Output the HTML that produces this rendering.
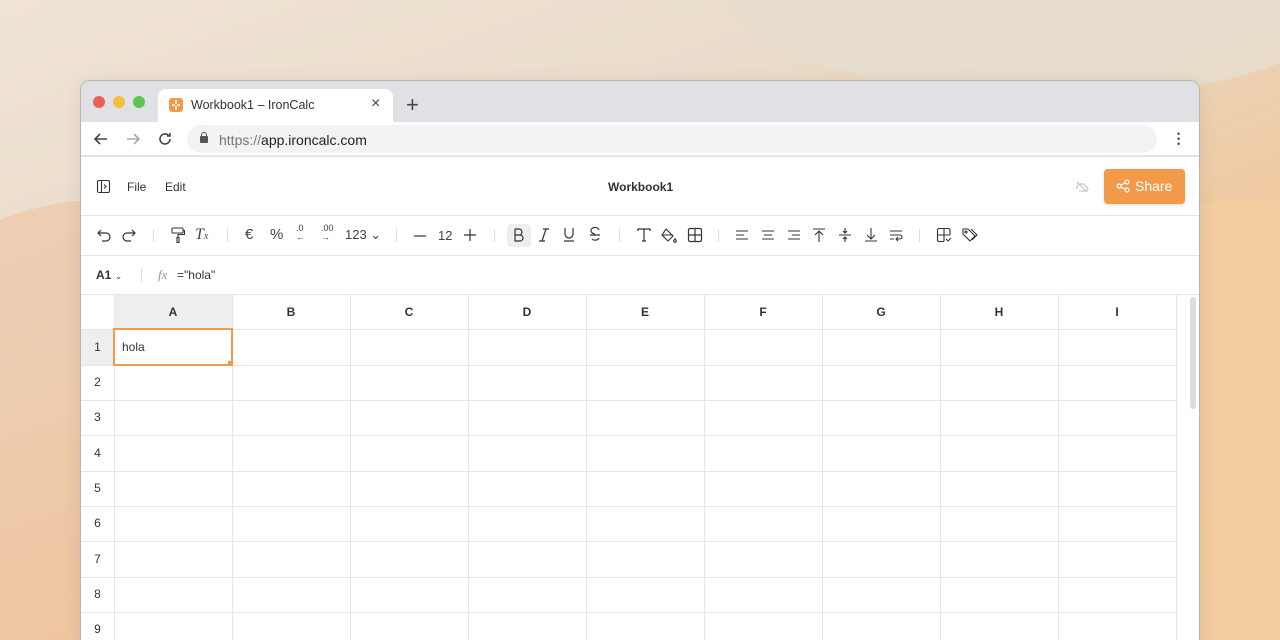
<!DOCTYPE html>
<html style="width:1280px;height:640px;overflow:hidden"><head><meta charset="utf-8"><style>
*{box-sizing:border-box;margin:0;padding:0}
body{width:1280px;height:640px;overflow:hidden;position:relative;font-family:"Liberation Sans",sans-serif;background:linear-gradient(160deg,#efe3d3 0%,#e9dccb 30%,#efc9a0 60%,#f0c49a 100%)}
.bg1{position:absolute;left:-200px;top:200px;width:600px;height:700px;border-radius:50%;background:#efc3a0;opacity:.6}
.bg2{position:absolute;left:700px;top:-200px;width:700px;height:300px;border-radius:50%;background:#e6ddd0;opacity:.8}
.bg3{position:absolute;left:900px;top:200px;width:700px;height:700px;border-radius:50%;background:#f2cf9f;opacity:.7}
.win{position:absolute;left:80px;top:80px;width:1120px;height:560px;background:#fff;border:1px solid #b8b4ae;border-bottom:none;border-radius:10px 10px 0 0;overflow:hidden;box-shadow:0 4px 20px rgba(0,0,0,.08)}
.abs{position:absolute}
.tabbar{left:0;top:0;width:100%;height:41px;background:#dfe1e5}
.dot{width:12px;height:12px;border-radius:50%;top:15px}
.tab{left:77px;top:8px;width:235px;height:33px;background:#fff;border-radius:8px 8px 0 0}
.addr{left:0;top:41px;width:100%;height:35px;background:#fff;border-bottom:2px solid #e3e3e3}
.url{left:106px;top:44px;width:970px;height:28px;background:#f1f3f4;border-radius:14px}
.t{color:#333;font-size:13px}
.line{background:#e6e6e6}
svg{overflow:visible}
.col{position:absolute;top:214px;height:34px;width:118px;text-align:center;line-height:34px;font-size:12px;font-weight:bold;color:#333}
.rn{position:absolute;left:0;width:33px;text-align:center;font-size:12px;color:#333}
</style></head><body>
<div class="bg1"></div><div class="bg2"></div><div class="bg3"></div>
<div class="win">
<div class="abs tabbar"></div>
<div class="abs dot" style="left:12px;background:#ee5f57"></div>
<div class="abs dot" style="left:32px;background:#f6bd3b"></div>
<div class="abs dot" style="left:52px;background:#5fc454"></div>
<div class="abs tab"></div>
<div class="abs" style="left:88px;top:17px;width:14px;height:14px;background:#f2994a;border-radius:3px"></div>
<svg class="abs" style="left:88px;top:17px" width="14" height="14" fill="none" stroke="#fff" stroke-width="1.6"><path d="M7 2v4M7 8v4M3 7h3M8 7h3"/></svg>
<div class="abs t" style="left:110px;top:17px;font-size:12.5px">Workbook1 – IronCalc</div>
<div class="abs" style="left:290px;top:14px;font-size:16px;color:#444">×</div>
<div class="abs" style="left:325px;top:11px;font-size:22px;color:#444;font-weight:300">+</div>
<div class="abs addr"></div>
<div class="abs url"></div>
<svg class="abs" style="left:12px;top:50px" width="16" height="16" fill="none" stroke="#444" stroke-width="1.6"><path d="M14 8H2M7 3L2 8l5 5"/></svg>
<svg class="abs" style="left:44px;top:50px" width="16" height="16" fill="none" stroke="#aaa" stroke-width="1.6"><path d="M2 8h12M9 3l5 5-5 5"/></svg>
<svg class="abs" style="left:76px;top:50px" width="16" height="16" fill="none" stroke="#444" stroke-width="1.6"><path d="M13 8a5 5 0 1 1-1.5-3.6M13 2v3h-3"/></svg>
<div class="abs" style="left:119px;top:55px;width:8px;height:7px;background:#555;border-radius:1px"></div>
<div class="abs" style="left:120px;top:51px;width:6px;height:6px;border:1.5px solid #555;border-bottom:none;border-radius:3px 3px 0 0"></div>
<div class="abs" style="left:138px;top:51px;font-size:14px;color:#777">https://<span style="color:#222">app.ironcalc.com</span></div>
<div class="abs" style="left:1096px;top:51px;width:3px;line-height:5px;font-size:9px;color:#444">•<br>•<br>•</div>
<svg class="abs" style="left:16px;top:99px" width="14" height="14" fill="none" stroke="#333" stroke-width="1.1"><rect x=".5" y=".5" width="12" height="12" rx="1.5"/><path d="M4.5 .5v12M7 4.5l2 2-2 2"/></svg>
<div class="abs t" style="left:46px;top:99px;font-size:12px">File</div>
<div class="abs t" style="left:84px;top:99px;font-size:12px">Edit</div>
<div class="abs t" style="left:527px;top:99px;font-size:12px;font-weight:bold">Workbook1</div>
<svg class="abs" style="left:995px;top:101px" width="12" height="10" fill="none" stroke="#bbb" stroke-width="1"><path d="M1 7a4 4 0 0 1 4-5 4 4 0 0 1 5 3 2 2 0 0 1 0 4H3M1 0l10 10"/></svg>
<div class="abs" style="left:1023px;top:88px;width:81px;height:35px;background:#f2994a;border-radius:4px;box-shadow:0 1px 3px rgba(0,0,0,.15);color:#fff;font-size:14px;line-height:35px;padding-left:31px">Share</div>
<svg class="abs" style="left:1035px;top:98px" width="14" height="14" fill="none" stroke="#fff" stroke-width="1.2"><circle cx="11" cy="3" r="2"/><circle cx="3" cy="7" r="2"/><circle cx="11" cy="11" r="2"/><path d="M5 6l4-2M5 8l4 2"/></svg>
<div class="abs line" style="left:0;top:134px;width:100%;height:1px"></div>
<div class="abs" style="left:426px;top:143px;width:24px;height:23px;background:#eee;border-radius:4px"></div>
<div class="abs" style="top:144px;left:0;width:100%;font-size:15px;color:#444;line-height:20px">
<svg class="abs" style="left:16px;top:4px" width="14" height="12" fill="none" stroke="#333" stroke-width="1.2"><path d="M4 1L1 4l3 3M1 4h8a4 4 0 0 1 0 8H5"/></svg>
<svg class="abs" style="left:41px;top:4px" width="14" height="12" fill="none" stroke="#333" stroke-width="1.2"><path d="M10 1l3 3-3 3M13 4H5a4 4 0 0 0 0 8h4"/></svg>
<div class="abs" style="left:72px;top:4px;width:1px;height:13px;background:#ddd"></div>
<svg class="abs" style="left:90px;top:2px" width="14" height="16" fill="none" stroke="#333" stroke-width="1.1"><rect x="1" y="1" width="11" height="5" rx="1"/><path d="M12 3.5h1.5v4H7v3M6 10.5h2v5H6z"/></svg>
<div class="abs" style="left:114px;top:0;font-family:'Liberation Serif',serif;font-style:italic;font-size:16px">T<span style="font-size:10px">x</span></div>
<div class="abs" style="left:146px;top:4px;width:1px;height:13px;background:#ddd"></div>
<div class="abs" style="left:164px;top:0">€</div>
<div class="abs" style="left:189px;top:0">%</div>
<div class="abs" style="left:215px;top:-1px;font-size:9px;line-height:9px">.0<br>←</div>
<div class="abs" style="left:240px;top:-1px;font-size:9px;line-height:9px">.00<br>→</div>
<div class="abs" style="left:264px;top:0;font-size:13px">123 ⌄</div>
<div class="abs" style="left:315px;top:4px;width:1px;height:13px;background:#ddd"></div>
<svg class="abs" style="left:333px;top:10px" width="12" height="2" stroke="#333" stroke-width="1.2"><path d="M0 1h12"/></svg>
<div class="abs" style="left:357px;top:1px;font-size:13px">12</div>
<svg class="abs" style="left:383px;top:4px" width="12" height="12" stroke="#333" stroke-width="1.2"><path d="M0 6h12M6 0v12"/></svg>
<div class="abs" style="left:413px;top:4px;width:1px;height:13px;background:#ddd"></div>
<svg class="abs" style="left:433px;top:4px" width="10" height="12" fill="none" stroke="#333" stroke-width="1.2"><path d="M1 0v12h5a3 3 0 0 0 0-6H1h4a3 3 0 0 0 0-6H1"/></svg>
<svg class="abs" style="left:458px;top:4px" width="10" height="12" fill="none" stroke="#333" stroke-width="1.2"><path d="M4 0h6M0 12h6M7 0L3 12"/></svg>
<svg class="abs" style="left:483px;top:3px" width="10" height="14" fill="none" stroke="#333" stroke-width="1.2"><path d="M1 0v6a4 4 0 0 0 8 0V0M0 13h10"/></svg>
<svg class="abs" style="left:509px;top:3px" width="10" height="14" fill="none" stroke="#333" stroke-width="1.2"><path d="M9 2a4 3 0 0 0-8 1c0 2 3 2.5 4 3.5M0 7h10M2 11a4 3 0 0 0 7-1"/></svg>
<div class="abs" style="left:538px;top:4px;width:1px;height:13px;background:#ddd"></div>
<svg class="abs" style="left:557px;top:4px" width="12" height="12" fill="none" stroke="#333" stroke-width="1.2"><path d="M0 2V0h12v2M6 0v12M4 12h4"/></svg>
<svg class="abs" style="left:580px;top:3px" width="16" height="15" fill="none" stroke="#333" stroke-width="1.1"><path d="M5 1l7 7-5 5-6-6zM1 7h11M14 10v2"/><circle cx="14" cy="13" r="1.3"/></svg>
<svg class="abs" style="left:607px;top:3px" width="14" height="14" fill="none" stroke="#333" stroke-width="1.2"><rect x=".5" y=".5" width="13" height="13" rx="1.5"/><path d="M7 .5v13M.5 7h13"/></svg>
<div class="abs" style="left:637px;top:4px;width:1px;height:13px;background:#ddd"></div>
<svg class="abs" style="left:654px;top:4px" width="14" height="12" stroke="#333" stroke-width="1.1"><path d="M1 2h12M1 6h8M1 10h12"/></svg>
<svg class="abs" style="left:680px;top:4px" width="14" height="12" stroke="#333" stroke-width="1.1"><path d="M1 2h12M3 6h8M1 10h12"/></svg>
<svg class="abs" style="left:706px;top:4px" width="14" height="12" stroke="#333" stroke-width="1.1"><path d="M1 2h12M5 6h8M1 10h12"/></svg>
<svg class="abs" style="left:731px;top:3px" width="14" height="14" fill="none" stroke="#333" stroke-width="1.1"><path d="M1 1h12M7 14V3M3 7l4-4 4 4"/></svg>
<svg class="abs" style="left:757px;top:3px" width="14" height="14" fill="none" stroke="#333" stroke-width="1.1"><path d="M1 7h12M7 0v5M5 3l2 2 2-2M7 14V9M5 11l2-2 2 2"/></svg>
<svg class="abs" style="left:783px;top:3px" width="14" height="14" fill="none" stroke="#333" stroke-width="1.1"><path d="M1 13h12M7 0v11M3 7l4 4 4-4"/></svg>
<svg class="abs" style="left:808px;top:4px" width="14" height="12" fill="none" stroke="#333" stroke-width="1.1"><path d="M1 2h12M1 6h10a2 2 0 0 1 0 4H8M9 8l-2 2 2 2M1 10h4"/></svg>
<div class="abs" style="left:838px;top:4px;width:1px;height:13px;background:#ddd"></div>
<svg class="abs" style="left:856px;top:3px" width="14" height="14" fill="none" stroke="#333" stroke-width="1.1"><path d="M13 7V2a1.5 1.5 0 0 0-1.5-1.5h-10A1.5 1.5 0 0 0 .5 2v10a1.5 1.5 0 0 0 1.5 1.5h5M.5 7h12.5M7 .5v13M9 11l2 2 3-3"/></svg>
<svg class="abs" style="left:881px;top:3px" width="16" height="14" fill="none" stroke="#333" stroke-width="1.1"><path d="M1 1h5l7 7-5 5-7-7zM9 1l6 6-5 5"/><circle cx="4" cy="4" r="1"/></svg>
</div>
<div class="abs line" style="left:0;top:174px;width:100%;height:1px"></div>
<div class="abs t" style="left:15px;top:187px;font-size:12px;font-weight:bold">A1 <span style="font-weight:normal;font-size:9px">⌄</span></div>
<div class="abs" style="left:60px;top:187px;width:1px;height:14px;background:#ddd"></div>
<div class="abs" style="left:77px;top:186px;font-family:'Liberation Serif',serif;font-style:italic;color:#999;font-size:13px">fx</div>
<div class="abs t" style="left:96px;top:187px;font-size:12px">="hola"</div>
<div class="abs line" style="left:0;top:213px;width:100%;height:1px"></div>
<div class="abs" style="left:33px;top:214px;width:118px;height:34px;background:#eee"></div>
<div class="abs" style="left:0;top:249px;width:33px;height:35px;background:#eee"></div>
<div class="col" style="left:33px">A</div><div class="col" style="left:151px">B</div><div class="col" style="left:269px">C</div><div class="col" style="left:387px">D</div><div class="col" style="left:505px">E</div><div class="col" style="left:623px">F</div><div class="col" style="left:741px">G</div><div class="col" style="left:859px">H</div><div class="col" style="left:977px">I</div>
<div class="abs line" style="left:33px;top:214px;width:1px;height:346px"></div>
<div class="abs line" style="left:151px;top:214px;width:1px;height:346px"></div>
<div class="abs line" style="left:269px;top:214px;width:1px;height:346px"></div>
<div class="abs line" style="left:387px;top:214px;width:1px;height:346px"></div>
<div class="abs line" style="left:505px;top:214px;width:1px;height:346px"></div>
<div class="abs line" style="left:623px;top:214px;width:1px;height:346px"></div>
<div class="abs line" style="left:741px;top:214px;width:1px;height:346px"></div>
<div class="abs line" style="left:859px;top:214px;width:1px;height:346px"></div>
<div class="abs line" style="left:977px;top:214px;width:1px;height:346px"></div>
<div class="abs line" style="left:1095px;top:214px;width:1px;height:346px"></div>
<div class="abs line" style="left:0;top:248px;width:1095px;height:1px"></div>
<div class="abs line" style="left:0;top:284px;width:1095px;height:1px"></div>
<div class="abs line" style="left:0;top:319px;width:1095px;height:1px"></div>
<div class="abs line" style="left:0;top:354px;width:1095px;height:1px"></div>
<div class="abs line" style="left:0;top:390px;width:1095px;height:1px"></div>
<div class="abs line" style="left:0;top:425px;width:1095px;height:1px"></div>
<div class="abs line" style="left:0;top:460px;width:1095px;height:1px"></div>
<div class="abs line" style="left:0;top:496px;width:1095px;height:1px"></div>
<div class="abs line" style="left:0;top:531px;width:1095px;height:1px"></div>
<div class="rn" style="top:259px">1</div><div class="rn" style="top:294px">2</div><div class="rn" style="top:329px">3</div><div class="rn" style="top:365px">4</div><div class="rn" style="top:400px">5</div><div class="rn" style="top:435px">6</div><div class="rn" style="top:471px">7</div><div class="rn" style="top:506px">8</div><div class="rn" style="top:541px">9</div>
<div class="abs" style="left:32px;top:247px;width:120px;height:38px;border:2px solid #f2994a"></div>
<div class="abs" style="left:147px;top:280px;width:5px;height:5px;background:#f2994a"></div>
<div class="abs t" style="left:41px;top:259px;font-size:12px">hola</div>
<div class="abs" style="left:1109px;top:216px;width:6px;height:112px;background:#ddd;border-radius:3px"></div>
</div>
</body></html>
